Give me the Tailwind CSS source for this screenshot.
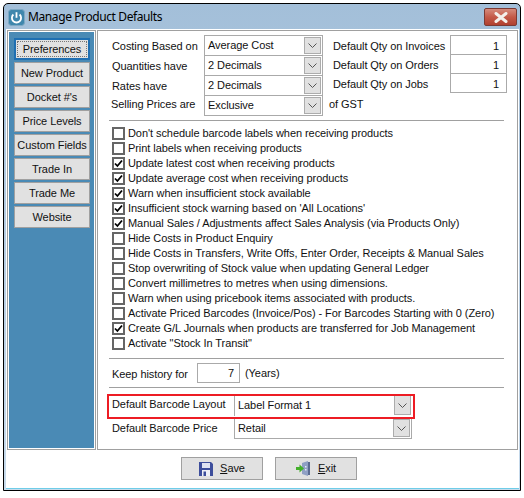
<!DOCTYPE html>
<html>

<head>
    <title>Manage Product Defaults</title>
    <meta name="viewport" content="width=device-width, initial-scale=1" />
    <script src="https://cdn.jsdelivr.net/npm/@tailwindcss/browser@4"></script>
</head>

<body class="bg-white font-['Liberation_Sans',Arial,sans-serif] text-[11px] tracking-[-0.07px] text-[#111] whitespace-nowrap">
    <div class="w-[524px] h-[498px] overflow-hidden pt-[3px] pl-[3px]">
        <!-- window frame -->
        <div class="w-[518px] h-[488px] border border-black rounded-t-[5px] flex flex-col bg-gradient-to-b from-[#a3bfd9] to-[#c8dbec] pl-[2px] pr-px pb-px">
            <div class="h-[25px] shrink-0 flex items-center relative">
                <svg class="ml-[2px] w-[17px] h-[17px] mt-px" viewBox="0 0 17 17">
                    <rect x="0.5" y="0.5" width="16" height="16" rx="3" fill="#3f87ad" stroke="#7fa9c4" />
                    <path d="M5.4 5.5a4.6 4.6 0 1 0 6.2 0" fill="none" stroke="#fff" stroke-width="1.8" />
                    <path d="M8.5 3.2v5.6" stroke="#fff" stroke-width="1.8" />
                </svg>
                <span class="ml-[3px] mt-px font-['Noto_Sans',sans-serif] text-[12px] tracking-[-0.4px] text-black">Manage Product Defaults</span>
                <div class="absolute right-[2px] top-[4px] w-[33px] h-[18px] rounded-[2px] border border-[#7c3a33] bg-gradient-to-b from-[#d58b7c] via-[#c45a48] to-[#b0402f] flex items-center justify-center">
                    <svg class="w-[14px] h-[11px]" viewBox="0 0 14 11">
                        <path d="M2 1.5 12 9.5M12 1.5 2 9.5" stroke="#f4f1ec" stroke-width="3" stroke-linecap="round" />
                    </svg>
                </div>
            </div>

            <!-- client area -->
            <div class="flex-1 bg-white pt-px pl-px border-b border-[#6fcde8] flex flex-col">
                <div class="flex gap-px h-[420px]">
                    <!-- left tabs -->
                    <div class="w-[89px] border border-[#a0a0a0] p-px">
                        <div class="h-full bg-[#4a8ab5] pt-[6px] pl-[5px] flex flex-col gap-[2px]">
                            <div class="w-[76px] h-[22px] border-2 border-[#1f6fb2] bg-[#e1e1e1] p-px flex"><span class="flex-1 border border-dotted border-[#777] flex items-center justify-center">Preferences</span></div>
                            <div class="w-[76px] h-[22px] border border-[#a0a0a0] bg-[#e1e1e1] flex items-center justify-center">New Product</div>
                            <div class="w-[76px] h-[22px] border border-[#a0a0a0] bg-[#e1e1e1] flex items-center justify-center">Docket #'s</div>
                            <div class="w-[76px] h-[22px] border border-[#a0a0a0] bg-[#e1e1e1] flex items-center justify-center">Price Levels</div>
                            <div class="w-[76px] h-[22px] border border-[#a0a0a0] bg-[#e1e1e1] flex items-center justify-center">Custom Fields</div>
                            <div class="w-[76px] h-[22px] border border-[#a0a0a0] bg-[#e1e1e1] flex items-center justify-center">Trade In</div>
                            <div class="w-[76px] h-[22px] border border-[#a0a0a0] bg-[#e1e1e1] flex items-center justify-center">Trade Me</div>
                            <div class="w-[76px] h-[22px] border border-[#a0a0a0] bg-[#e1e1e1] flex items-center justify-center">Website</div>
                        </div>
                    </div>

                    <!-- right panel -->
                    <div class="w-[421px] border border-[#a0a0a0] flex flex-col">
                        <div class="flex pt-[4px] h-[88px]">
                            <div class="w-[225px] pl-[14px] flex flex-col">
                                <div class="flex items-center h-[21px]">
                                    <span class="w-[92px] mt-[2px]">Costing Based on</span>
                                    <div class="w-[119px] h-[21px] border border-[#aaa] flex items-center justify-between pl-[3px] pr-px">Average Cost
                                        <span class="w-[17px] h-[17px] border border-[#acacac] bg-[#e1e1e1] flex items-center justify-center"><svg class="w-[9px] h-[5px]" viewBox="0 0 9 5"><path d="M.5.5 4.500 4.500 8.500.5" fill="none" stroke="#555" /></svg></span>
                                    </div>
                                </div>
                                <div class="flex items-center h-[21px] mt-[-1px]">
                                    <span class="w-[92px] mt-[2px]">Quantities have</span>
                                    <div class="w-[119px] h-[21px] border border-[#aaa] flex items-center justify-between pl-[3px] pr-px">2 Decimals
                                        <span class="w-[17px] h-[17px] border border-[#acacac] bg-[#e1e1e1] flex items-center justify-center"><svg class="w-[9px] h-[5px]" viewBox="0 0 9 5"><path d="M.5.5 4.500 4.500 8.500.5" fill="none" stroke="#555" /></svg></span>
                                    </div>
                                </div>
                                <div class="flex items-center h-[21px] mt-[-1px]">
                                    <span class="w-[92px] mt-[2px]">Rates have</span>
                                    <div class="w-[119px] h-[21px] border border-[#aaa] flex items-center justify-between pl-[3px] pr-px">2 Decimals
                                        <span class="w-[17px] h-[17px] border border-[#acacac] bg-[#e1e1e1] flex items-center justify-center"><svg class="w-[9px] h-[5px]" viewBox="0 0 9 5"><path d="M.5.5 4.500 4.500 8.500.5" fill="none" stroke="#555" /></svg></span>
                                    </div>
                                </div>
                                <div class="flex items-center h-[21px] mt-[-1px]">
                                    <span class="w-[92px] -ml-px mr-px mb-[2px]">Selling Prices are</span>
                                    <div class="w-[119px] h-[21px] border border-[#aaa] flex items-center justify-between pl-[3px] pr-px">Exclusive
                                        <span class="w-[17px] h-[17px] border border-[#acacac] bg-[#e1e1e1] flex items-center justify-center"><svg class="w-[9px] h-[5px]" viewBox="0 0 9 5"><path d="M.5.5 4.500 4.500 8.500.5" fill="none" stroke="#555" /></svg></span>
                                    </div>
                                </div>
                            </div>
                            <div class="pl-[10px] flex flex-col">
                                <div class="flex items-center h-[20px]">
                                    <span class="w-[117px] mt-[2px]">Default Qty on Invoices</span>
                                    <div class="w-[57px] h-[20px] border border-[#aaa] text-right pr-[7px] leading-[20px]">1</div>
                                </div>
                                <div class="flex items-center h-[20px] mt-[-1px]">
                                    <span class="w-[117px] mt-[2px]">Default Qty on Orders</span>
                                    <div class="w-[57px] h-[20px] border border-[#aaa] text-right pr-[7px] leading-[20px]">1</div>
                                </div>
                                <div class="flex items-center h-[20px] mt-[-1px]">
                                    <span class="w-[117px] mt-[2px]">Default Qty on Jobs</span>
                                    <div class="w-[57px] h-[20px] border border-[#aaa] text-right pr-[7px] leading-[20px]">1</div>
                                </div>
                                <div class="-ml-[4px] mt-[3px]">of GST</div>
                            </div>
                        </div>

                        <div class="mx-[11px] mt-px w-[395px] border-t border-[#a0a0a0]"></div>

                        <!-- options -->
                        <div class="pl-[14px] pt-[5px] flex flex-col">
                            <label class="flex items-center h-[15px] gap-[3px]"><span class="w-[13px] h-[13px] border-2 border-[#666] flex items-center justify-center"></span>Don't schedule barcode labels when receiving products</label>
                            <label class="flex items-center h-[15px] gap-[3px]"><span class="w-[13px] h-[13px] border-2 border-[#666] flex items-center justify-center"></span>Print labels when receiving products</label>
                            <label class="flex items-center h-[15px] gap-[3px]"><span class="w-[13px] h-[13px] border-2 border-[#666] flex items-center justify-center"><svg class="w-[9px] h-[9px]" viewBox="0 0 9 9"><path d="M1 4.500 3.400 7 8 1.500" fill="none" stroke="#000" stroke-width="1.800" /></svg></span>Update latest cost when receiving products</label>
                            <label class="flex items-center h-[15px] gap-[3px]"><span class="w-[13px] h-[13px] border-2 border-[#666] flex items-center justify-center"><svg class="w-[9px] h-[9px]" viewBox="0 0 9 9"><path d="M1 4.500 3.400 7 8 1.500" fill="none" stroke="#000" stroke-width="1.800" /></svg></span>Update average cost when receiving products</label>
                            <label class="flex items-center h-[15px] gap-[3px]"><span class="w-[13px] h-[13px] border-2 border-[#666] flex items-center justify-center"><svg class="w-[9px] h-[9px]" viewBox="0 0 9 9"><path d="M1 4.500 3.400 7 8 1.500" fill="none" stroke="#000" stroke-width="1.800" /></svg></span>Warn when insufficient stock available</label>
                            <label class="flex items-center h-[15px] gap-[3px]"><span class="w-[13px] h-[13px] border-2 border-[#666] flex items-center justify-center"><svg class="w-[9px] h-[9px]" viewBox="0 0 9 9"><path d="M1 4.500 3.400 7 8 1.500" fill="none" stroke="#000" stroke-width="1.800" /></svg></span>Insufficient stock warning based on 'All Locations'</label>
                            <label class="flex items-center h-[15px] gap-[3px]"><span class="w-[13px] h-[13px] border-2 border-[#666] flex items-center justify-center"><svg class="w-[9px] h-[9px]" viewBox="0 0 9 9"><path d="M1 4.500 3.400 7 8 1.500" fill="none" stroke="#000" stroke-width="1.800" /></svg></span>Manual Sales / Adjustments affect Sales Analysis (via Products Only)</label>
                            <label class="flex items-center h-[15px] gap-[3px]"><span class="w-[13px] h-[13px] border-2 border-[#666] flex items-center justify-center"></span>Hide Costs in Product Enquiry</label>
                            <label class="flex items-center h-[15px] gap-[3px]"><span class="w-[13px] h-[13px] border-2 border-[#666] flex items-center justify-center"></span>Hide Costs in Transfers, Write Offs, Enter Order, Receipts &amp; Manual Sales</label>
                            <label class="flex items-center h-[15px] gap-[3px]"><span class="w-[13px] h-[13px] border-2 border-[#666] flex items-center justify-center"></span>Stop overwriting of Stock value when updating General Ledger</label>
                            <label class="flex items-center h-[15px] gap-[3px]"><span class="w-[13px] h-[13px] border-2 border-[#666] flex items-center justify-center"></span>Convert millimetres to metres when using dimensions.</label>
                            <label class="flex items-center h-[15px] gap-[3px]"><span class="w-[13px] h-[13px] border-2 border-[#666] flex items-center justify-center"></span>Warn when using pricebook items associated with products.</label>
                            <label class="flex items-center h-[15px] gap-[3px]"><span class="w-[13px] h-[13px] border-2 border-[#666] flex items-center justify-center"></span>Activate Priced Barcodes (Invoice/Pos) - For Barcodes Starting with 0 (Zero)</label>
                            <label class="flex items-center h-[15px] gap-[3px]"><span class="w-[13px] h-[13px] border-2 border-[#666] flex items-center justify-center"><svg class="w-[9px] h-[9px]" viewBox="0 0 9 9"><path d="M1 4.500 3.400 7 8 1.500" fill="none" stroke="#000" stroke-width="1.800" /></svg></span>Create G/L Journals when products are transferred for Job Management</label>
                            <label class="flex items-center h-[15px] gap-[3px]"><span class="w-[13px] h-[13px] border-2 border-[#666] flex items-center justify-center"></span>Activate "Stock In Transit"</label>
                        </div>

                        <div class="mx-[11px] mt-[7px] w-[395px] border-t border-[#a0a0a0]"></div>

                        <div class="flex items-center pl-[14px] mt-[4px] h-[20px]">
                            <span class="w-[85px] mt-[2px]">Keep history for</span>
                            <div class="w-[43px] h-[20px] border border-[#aaa] text-right pr-[5px] leading-[19px]">7</div>
                            <span class="ml-[5px]">(Years)</span>
                        </div>

                        <div class="mx-[11px] mt-[4px] w-[395px] border-t border-[#a0a0a0]"></div>

                        <div class="relative mt-[6px] ml-[9px] w-[308px] flex flex-col">
                            <div class="absolute inset-x-0 top-0 h-[25px] border-2 border-[#ed1c24] z-10 pointer-events-none"></div>
                            <div class="flex items-start h-[23px] pl-[5px]">
                                <span class="w-[122px] leading-[20px]">Default Barcode Layout</span>
                                <div class="w-[178px] h-[22px] border-l border-[#aaa] flex items-center justify-between pl-[3px] pr-px">Label Format 1
                                    <span class="w-[17px] h-[20px] border border-[#acacac] bg-[#e1e1e1] flex items-center justify-center"><svg class="w-[9px] h-[5px]" viewBox="0 0 9 5"><path d="M.5.5 4.500 4.500 8.500.5" fill="none" stroke="#555" /></svg></span>
                                </div>
                            </div>
                            <div class="flex items-center h-[22px] pl-[5px]">
                                <span class="w-[122px]">Default Barcode Price</span>
                                <div class="w-[178px] h-[22px] border border-[#aaa] flex items-center justify-between pl-[3px] pr-px">Retail
                                    <span class="w-[17px] h-[18px] border border-[#acacac] bg-[#e1e1e1] flex items-center justify-center"><svg class="w-[9px] h-[5px]" viewBox="0 0 9 5"><path d="M.5.5 4.500 4.500 8.500.5" fill="none" stroke="#555" /></svg></span>
                                </div>
                            </div>
                        </div>
                    </div>
                </div>

                <!-- bottom buttons -->
                <div class="flex gap-[12px] pl-[174px] pt-[7px]">
                    <button class="w-[82px] h-[23px] border border-[#a0a0a0] bg-[#e1e1e1] flex items-center justify-center gap-[7px]">
                        <svg class="w-[14px] h-[14px]" viewBox="0 0 14 14">
                            <path d="M0 0h12l2 2v12H0z" fill="#3d4e9c" />
                            <rect x="3" y="1" width="8" height="5" fill="#dfe3f2" />
                            <rect x="3" y="8" width="8" height="6" fill="#eef0f7" />
                            <rect x="4.500" y="9.500" width="2.500" height="4.500" fill="#3d4e9c" />
                        </svg>
                        <span><span class="underline">S</span>ave</span>
                    </button>
                    <button class="w-[82px] h-[23px] border border-[#a0a0a0] bg-[#e1e1e1] flex items-center justify-center gap-[8px]">
                        <svg class="w-[14px] h-[15px]" viewBox="0 0 14 15">
                            <path d="M6 2l6-2v15l-6-2z" fill="#8fa0c4" />
                            <path d="M12 1h2v13h-2z" fill="#5a6a90" />
                            <path d="M9 5h1.500v1.500H9zM9 8h1.500v1.500H9z" fill="#e6e9f4" />
                            <path d="M0 6h3.500V3.500L8 7.500l-4.500 4V9H0z" fill="#43b02a" />
                        </svg>
                        <span><span class="underline">E</span>xit</span>
                    </button>
                </div>
            </div>
        </div>
    </div>
</body>

</html>
